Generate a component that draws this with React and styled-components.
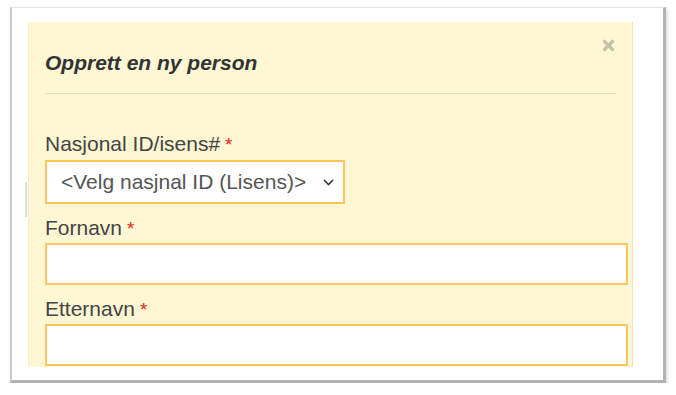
import React from 'react'
import styled, { createGlobalStyle } from 'styled-components'

const YELLOW = '#fdf7d3'
const ORANGE = '#fdc65c'

const GlobalStyle = createGlobalStyle`
  html, body {
    margin: 0;
    padding: 0;
    background: #ffffff;
    font-family: "Liberation Sans", Arial, sans-serif;
  }
  #root {
    padding: 7px 0 0 10px;
  }
`

const Frame = styled.div`
    display: flex;
    align-items: flex-start;
    width: 656px;
    height: 376px;
    box-sizing: border-box;
    background: #ffffff;
    border-left: 2px solid #cbcbcb;
    border-top: 1px solid #e4e4e4;
    border-right: 3px solid #b3b3b3;
    border-bottom: 3px solid #b3b3b3;
    box-shadow: 1px 2px 3px rgba(0, 0, 0, 0.18);
    padding-top: 14px;
`

const Gutter = styled.div`
    width: 16px;
    flex-shrink: 0;
    padding-top: 160px;
`

const Sliver = styled.div`
    margin-left: 13px;
    width: 2px;
    height: 35px;
    background: #dddddd;
`

const Panel = styled.div`
    position: relative;
    width: 605px;
    height: 345px;
    box-sizing: border-box;
    overflow: hidden;
    background: ${YELLOW};
    border-left: 1px solid #f4eecb;
    border-right: 1px solid #e9e3c2;
    padding: 0 4px 0 16px;
`

const Header = styled.div`
    margin-right: 12px;
    padding: 29px 0 18px 0;
    border-bottom: 1px solid #e6dfc4;
`

const Title = styled.h4`
    margin: 0;
    font-size: 21px;
    line-height: 24px;
    font-weight: bold;
    font-style: italic;
    color: #333333;
`

const Close = styled.button`
    position: absolute;
    top: 17px;
    right: 17px;
    width: 13px;
    height: 13px;
    padding: 0;
    border: none;
    background: transparent;
    display: flex;
    color: #c6c2a7;
`

const Form = styled.div`
    padding-top: 38px;
    display: flex;
    flex-direction: column;
`

const Field = styled.div`
    display: flex;
    flex-direction: column;
    align-items: flex-start;
    margin-top: ${p => p.$gap || 0}px;
`

const Label = styled.label`
    font-size: 21px;
    line-height: 24px;
    color: #444444;
    margin-bottom: ${p => p.$space || 2}px;
`

const Required = styled.span`
    color: #e52222;
    font-size: 19px;
    margin-left: 5px;
`

const SelectBox = styled.div`
    width: 300px;
    height: 44px;
    box-sizing: border-box;
    border: 2px solid ${ORANGE};
    background: #ffffff;
    display: flex;
    align-items: center;
    justify-content: space-between;
    padding: 0 9px 0 14px;
    font-size: 21px;
    color: #555555;
`

const TextInput = styled.div`
    align-self: stretch;
    height: 42px;
    box-sizing: border-box;
    border: 2px solid ${ORANGE};
    background: #ffffff;
`

const App = () => {
  return (
    <>
      <GlobalStyle />
      <Frame>
        <Gutter>
          <Sliver />
        </Gutter>
        <Panel>
          <Close aria-label="Lukk">
            <svg width="13" height="13" viewBox="0 0 13 13">
              <path d="M1.5 1.5 L11.5 11.5 M11.5 1.5 L1.5 11.5" stroke="currentColor" strokeWidth="3.2" />
            </svg>
          </Close>
          <Header>
            <Title>Opprett en ny person</Title>
          </Header>
          <Form>
            <Field>
              <Label $space={3}>Nasjonal ID/isens#<Required>*</Required></Label>
              <SelectBox>
                <span>&lt;Velg nasjnal ID (Lisens)&gt;</span>
                <svg width="11" height="7" viewBox="0 0 11 7">
                  <polyline points="1,1 5.5,5.5 10,1" fill="none" stroke="#333" strokeWidth="1.6" />
                </svg>
              </SelectBox>
            </Field>
            <Field $gap={12}>
              <Label>Fornavn<Required>*</Required></Label>
              <TextInput />
            </Field>
            <Field $gap={12}>
              <Label>Etternavn<Required>*</Required></Label>
              <TextInput />
            </Field>
          </Form>
        </Panel>
      </Frame>
    </>
  )
}

export default App
